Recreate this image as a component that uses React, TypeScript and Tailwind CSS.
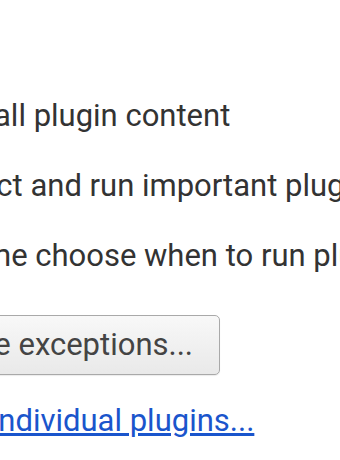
import React from "react";

const OPTIONS = [
  "Run all plugin content",
  "Detect and run important plugin content (recommended)",
  "Let me choose when to run plugin content",
];

const App = () => {
  return (
    <div
      className="w-[340px] h-[460px] overflow-hidden bg-white text-[#333333]"
      style={{ fontFamily: "Roboto, 'Liberation Sans', sans-serif" }}
    >
      <div className="ml-[-128px] pt-[81px] w-[900px] text-[31px]">
        {/* plugin radio options */}
        {OPTIONS.map((label, i) => (
          <label
            key={label}
            className="flex items-center h-[70px] leading-[70px] whitespace-nowrap"
          >
            <input
              type="radio"
              name="plugins"
              defaultChecked={i === 1}
              className="ml-[14px] mr-[17px] w-[30px] h-[30px]"
            />
            <span>{label}</span>
          </label>
        ))}

        {/* exceptions button */}
        <div className="mt-[24px]">
          <button className="h-[60px] leading-[58px] px-[26px] border border-[#a9a9a9] rounded-[5px] bg-gradient-to-b from-[#f8f8f8] to-[#e9e9e9] text-[#444444] shadow-[0_1px_1px_rgba(0,0,0,0.08)] whitespace-nowrap">
            Manage exceptions...
          </button>
        </div>

        {/* plugin list link */}
        <div className="mt-[26px] ml-[9px] leading-[40px]">
          <a href="#" className="text-[#1a55cc] underline whitespace-nowrap">
            Disable individual plugins...
          </a>
        </div>
      </div>
    </div>
  );
};

export default App;
